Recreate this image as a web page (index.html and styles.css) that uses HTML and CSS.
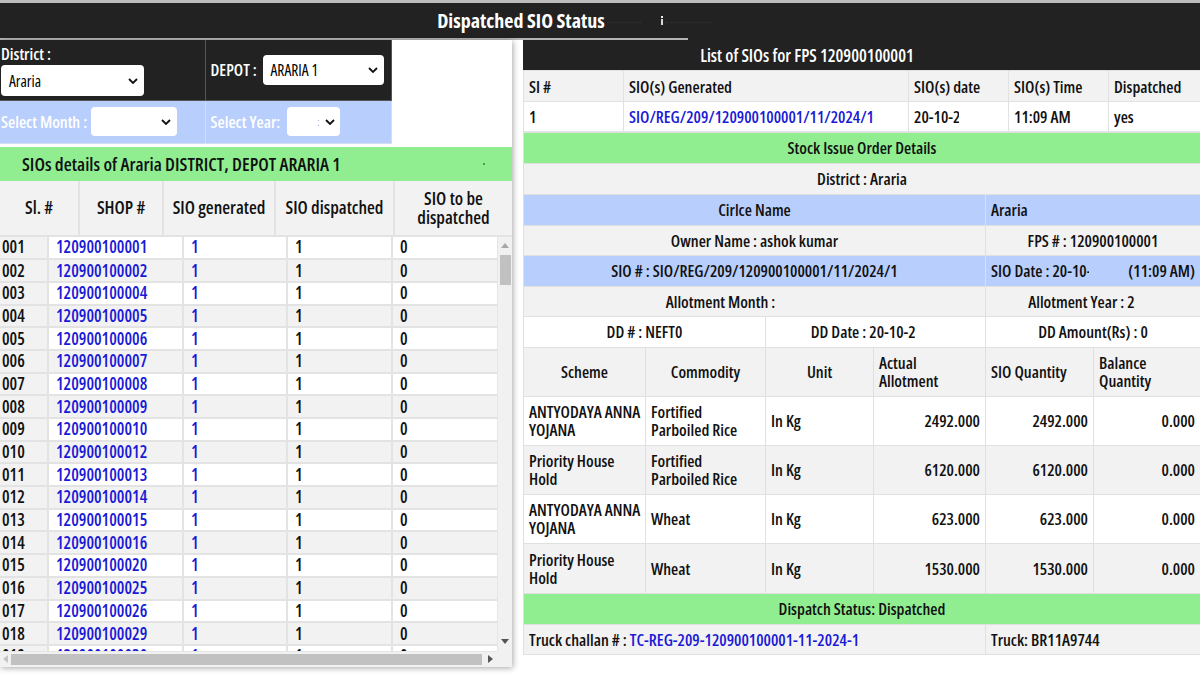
FILE: index.html
```html
<!DOCTYPE html>
<html lang="en">
<head>
<meta charset="utf-8">
<title>Dispatched SIO Status</title>
<link rel="stylesheet" href="styles.css">
</head>
<body>
<header class="topbar">
  <div class="title-row">
    <h1 class="title">Dispatched SIO Status</h1>
    <span class="loader"><span class="dots"></span><span class="tick"></span><span class="dots long"></span></span>
  </div>
</header>
<div class="rule"><span class="rule-light"></span></div>
<main class="layout">
  <section class="left">
    <table class="filters">
      <colgroup><col class="fc1"><col class="fc2"></colgroup>
      <tr class="dark">
        <td class="top">
          <div class="lbl">District :</div>
          <span class="select s-district"><span>Araria</span><svg class="chev" width="10" height="6" viewBox="0 0 10 6"><path d="M1 1l4 4 4-4" fill="none" stroke="#111" stroke-width="1.8"/></svg></span>
        </td>
        <td>
          <div class="cell-flex spread"><span class="lbl">DEPOT :</span><span class="select s-depot"><span>ARARIA 1</span><svg class="chev" width="10" height="6" viewBox="0 0 10 6"><path d="M1 1l4 4 4-4" fill="none" stroke="#111" stroke-width="1.8"/></svg></span></div>
        </td>
      </tr>
      <tr class="blue">
        <td>
          <div class="cell-flex"><span class="lbl">Select Month :</span><span class="select s-month"><span></span><svg class="chev" width="10" height="6" viewBox="0 0 10 6"><path d="M1 1l4 4 4-4" fill="none" stroke="#111" stroke-width="1.8"/></svg></span></div>
        </td>
        <td>
          <div class="cell-flex pad5"><span class="lbl">Select Year:</span><span class="select s-year"><span class="faint">:</span><svg class="chev" width="10" height="6" viewBox="0 0 10 6"><path d="M1 1l4 4 4-4" fill="none" stroke="#111" stroke-width="1.8"/></svg></span></div>
        </td>
      </tr>
    </table>

    <div class="list-head"><span>SIOs details of Araria DISTRICT, DEPOT ARARIA 1</span><span class="spot"></span></div>

    <table class="grid-head">
      <colgroup><col class="h1"><col class="h2"><col class="h3"><col class="h4"><col class="h5"></colgroup>
      <tr><th>Sl. #</th><th>SHOP #</th><th>SIO generated</th><th>SIO dispatched</th><th>SIO to be<br>dispatched</th></tr>
    </table>

    <div class="scroller">
      <div class="viewport">
        <table class="grid-body">
          <colgroup><col class="b1"><col class="b2"><col class="b3"><col class="b4"><col class="b5"></colgroup>
          <tr><td>001</td><td><a href="#">120900100001</a></td><td><a href="#">1</a></td><td>1</td><td>0</td></tr>
          <tr><td>002</td><td><a href="#">120900100002</a></td><td><a href="#">1</a></td><td>1</td><td>0</td></tr>
          <tr><td>003</td><td><a href="#">120900100004</a></td><td><a href="#">1</a></td><td>1</td><td>0</td></tr>
          <tr><td>004</td><td><a href="#">120900100005</a></td><td><a href="#">1</a></td><td>1</td><td>0</td></tr>
          <tr><td>005</td><td><a href="#">120900100006</a></td><td><a href="#">1</a></td><td>1</td><td>0</td></tr>
          <tr><td>006</td><td><a href="#">120900100007</a></td><td><a href="#">1</a></td><td>1</td><td>0</td></tr>
          <tr><td>007</td><td><a href="#">120900100008</a></td><td><a href="#">1</a></td><td>1</td><td>0</td></tr>
          <tr><td>008</td><td><a href="#">120900100009</a></td><td><a href="#">1</a></td><td>1</td><td>0</td></tr>
          <tr><td>009</td><td><a href="#">120900100010</a></td><td><a href="#">1</a></td><td>1</td><td>0</td></tr>
          <tr><td>010</td><td><a href="#">120900100012</a></td><td><a href="#">1</a></td><td>1</td><td>0</td></tr>
          <tr><td>011</td><td><a href="#">120900100013</a></td><td><a href="#">1</a></td><td>1</td><td>0</td></tr>
          <tr><td>012</td><td><a href="#">120900100014</a></td><td><a href="#">1</a></td><td>1</td><td>0</td></tr>
          <tr><td>013</td><td><a href="#">120900100015</a></td><td><a href="#">1</a></td><td>1</td><td>0</td></tr>
          <tr><td>014</td><td><a href="#">120900100016</a></td><td><a href="#">1</a></td><td>1</td><td>0</td></tr>
          <tr><td>015</td><td><a href="#">120900100020</a></td><td><a href="#">1</a></td><td>1</td><td>0</td></tr>
          <tr><td>016</td><td><a href="#">120900100025</a></td><td><a href="#">1</a></td><td>1</td><td>0</td></tr>
          <tr><td>017</td><td><a href="#">120900100026</a></td><td><a href="#">1</a></td><td>1</td><td>0</td></tr>
          <tr><td>018</td><td><a href="#">120900100029</a></td><td><a href="#">1</a></td><td>1</td><td>0</td></tr>
          <tr><td>019</td><td><a href="#">120900100030</a></td><td><a href="#">1</a></td><td>1</td><td>0</td></tr>
        </table>
      </div>
      <div class="vbar">
        <span class="arrow"><svg width="8" height="5" viewBox="0 0 8 5"><path d="M0 5L4 0L8 5Z" fill="#a8a8a8"/></svg></span>
        <span class="vthumb"></span>
        <span class="grow"></span>
        <span class="arrow"><svg width="8" height="5" viewBox="0 0 8 5"><path d="M0 0L8 0L4 5Z" fill="#555"/></svg></span>
      </div>
      <div class="hbar">
        <span class="harrow"><svg width="5" height="8" viewBox="0 0 5 8"><path d="M5 0L5 8L0 4Z" fill="#c4c4c4"/></svg></span>
        <span class="hthumb"></span>
        <span class="harrow"><svg width="5" height="8" viewBox="0 0 5 8"><path d="M0 0L5 4L0 8Z" fill="#555"/></svg></span>
      </div>
      <div class="corner"></div>
    </div>
  </section>

  <section class="right">
    <div class="list-title">List of SIOs for FPS 120900100001</div>
    <table class="sio-table">
      <colgroup><col class="l1"><col class="l2"><col class="l3"><col class="l4"><col class="l5"></colgroup>
      <thead><tr><th>SI #</th><th>SIO(s) Generated</th><th>SIO(s) date</th><th>SIO(s) Time</th><th>Dispatched</th></tr></thead>
      <tbody><tr><td>1</td><td><a href="#">SIO/REG/209/120900100001/11/2024/1</a></td><td><span class="clip c-date">20-10-2024</span></td><td>11:09 AM</td><td>yes</td></tr></tbody>
    </table>

    <table class="details">
      <colgroup><col class="d1"><col class="d2"><col class="d3"><col class="d4"><col class="d5"><col class="d6"></colgroup>
      <tr class="g h31"><td colspan="6">Stock Issue Order Details</td></tr>
      <tr class="gr h31"><td colspan="6" class="c">District : Araria</td></tr>
      <tr class="bl h31"><td colspan="4" class="c">Cirlce Name</td><td colspan="2">Araria</td></tr>
      <tr class="gr h30"><td colspan="4" class="c">Owner Name : ashok kumar</td><td colspan="2" class="c">FPS # : 120900100001</td></tr>
      <tr class="bl h31"><td colspan="4" class="c">SIO # : SIO/REG/209/120900100001/11/2024/1</td><td colspan="2"><div class="sio-date"><span>SIO Date : <span class="clip c-sdate">20-10-2024</span></span><span>(11:09 AM)</span></div></td></tr>
      <tr class="gr h30"><td colspan="4" class="c shift-month">Allotment Month :</td><td colspan="2" class="c shift-year">Allotment Year : <span class="clip c-year">2024</span></td></tr>
      <tr class="wh h31"><td colspan="2" class="c">DD # : NEFT0</td><td colspan="2" class="c shift-dd">DD Date : <span class="clip c-dd">20-10-2024</span></td><td colspan="2" class="c">DD Amount(Rs) : 0</td></tr>
      <tr class="gr h49"><td class="c">Scheme</td><td class="c">Commodity</td><td class="c">Unit</td><td>Actual<br>Allotment</td><td>SIO Quantity</td><td>Balance<br>Quantity</td></tr>
      <tr class="wh h49"><td>ANTYODAYA ANNA<br>YOJANA</td><td>Fortified<br>Parboiled Rice</td><td>In Kg</td><td class="r">2492.000</td><td class="r">2492.000</td><td class="r">0.000</td></tr>
      <tr class="gr h49"><td>Priority House<br>Hold</td><td>Fortified<br>Parboiled Rice</td><td>In Kg</td><td class="r">6120.000</td><td class="r">6120.000</td><td class="r">0.000</td></tr>
      <tr class="wh h49"><td>ANTYODAYA ANNA<br>YOJANA</td><td>Wheat</td><td>In Kg</td><td class="r">623.000</td><td class="r">623.000</td><td class="r">0.000</td></tr>
      <tr class="gr h50"><td>Priority House<br>Hold</td><td>Wheat</td><td>In Kg</td><td class="r">1530.000</td><td class="r">1530.000</td><td class="r">0.000</td></tr>
      <tr class="g h31"><td colspan="6">Dispatch Status: Dispatched</td></tr>
      <tr class="gr h30"><td colspan="4">Truck challan # : <a href="#">TC-REG-209-120900100001-11-2024-1</a></td><td colspan="2">Truck: BR11A9744</td></tr>
    </table>
  </section>
</main>
</body>
</html>
```
FILE: styles.css
```css
:root {
  --dark: #222222;
  --green: #90ee90;
  --gray: #f2f2f2;
  --blue: #b8cefc;
  --line: #e0e0e0;
  --link: #1a1ad6;
}
* { box-sizing: border-box; }
html, body { margin: 0; padding: 0; }
body {
  width: 1200px;
  height: 675px;
  overflow: hidden;
  background: #fff;
  color: #111;
  font-family: "Open Sans", "Liberation Sans", sans-serif;
  font-size: 16.5px;
  font-stretch: 79%;
  font-weight: 600;
}
table { border-collapse: collapse; }
th, td { padding: 0; font-weight: inherit; }
a { color: var(--link); text-decoration: none; }

/* top bar */
.topbar {
  height: 38px;
  background: var(--dark);
  border-top: 3px solid #bcbcbc;
  display: flex;
  justify-content: center;
  align-items: center;
}
.title-row { display: flex; align-items: center; }
.title { margin: 0; font-size: 20px; font-stretch: 75%; font-weight: 700; color: #fff; line-height: 1; }
.loader { width: 158px; display: flex; align-items: center; padding-left: 2px; }
.dots { width: 34px; height: 4px; border-bottom: 1px dotted #333; }
.dots.long { width: 46px; margin-left: 3px; }
.tick { width: 2px; height: 9px; margin-left: 20px; background: linear-gradient(#eee 0 2px, transparent 2px 3px, #d8d8d8 3px); }
.rule { height: 2px; background: var(--dark); display: flex; }
.rule-light { width: 688px; background: #b4b4b4; }

/* layout */
.layout { display: flex; align-items: flex-start; gap: 11px; }
.left { width: 512px; flex: none; background: #fff; box-shadow: 1px 1px 6px rgba(0, 0, 0, .35); }
.right { flex: 1; min-width: 0; overflow: hidden; }

/* filters */
.filters { width: 391px; margin-bottom: 3px; table-layout: fixed; }
.filters .fc1 { width: 205px; }
.filters .fc2 { width: 186px; }
.filters td { border: 1px solid #555; vertical-align: middle; color: #fff; }
.filters td:first-child { border-left: 0; }
.filters tr:first-child td { border-top: 0; }
.filters .dark td { background: var(--dark); height: 60px; }
.filters .blue td { background: var(--blue); height: 43px; border-color: #d3def5; }
.filters .blue td:first-child { border-left: 0; }
.filters td.top { vertical-align: top; padding: 4px 0 0 1px; }
.lbl { white-space: nowrap; }
.filters .top .lbl { margin-bottom: 1px; line-height: 20px; }
.cell-flex { display: flex; align-items: center; gap: 4px; padding-left: 1px; }
.cell-flex.spread { justify-content: space-between; padding: 0 7px 0 5px; }
.cell-flex.pad5 { padding-left: 5px; gap: 7px; }
.select {
  display: inline-flex;
  align-items: center;
  justify-content: space-between;
  background: #fff;
  color: #000;
  border-radius: 4px;
  padding: 0 6px 0 8px;
  height: 30px;
  font-size: 15.5px;
  font-weight: 500;
}
.s-district { width: 143px; height: 31px; }
.s-depot { width: 121px; }
.s-month { width: 86px; height: 29px; }
.s-year { width: 53px; height: 29px; padding-left: 30px; padding-right: 5px; }
.faint { color: #9ab; font-size: 10px; }

/* left list */
.list-head {
  height: 34px;
  background: var(--green);
  display: flex;
  align-items: center;
  padding-left: 22px;
  color: #111;
  font-size: 18.5px;
}
.spot { width: 2px; height: 2px; background: #4c9a4c; margin-left: auto; margin-right: 27px; }
.grid-head { width: 512px; table-layout: fixed; background: var(--gray); }
.grid-head .h1 { width: 79px; }
.grid-head .h2 { width: 84px; }
.grid-head .h3 { width: 112px; }
.grid-head .h4 { width: 119px; }
.grid-head .h5 { width: 118px; }
.grid-head th {
  height: 55px;
  border-right: 2px solid #e3e3e3;
  border-bottom: 2px solid #e3e3e3;
  text-align: center;
  line-height: 19px;
  white-space: nowrap;
  font-size: 18px;
}
.grid-head th:last-child { border-right: 0; }

.scroller {
  display: grid;
  grid-template-columns: 497px 15px;
  grid-template-rows: 414px 16px;
  background: #f1f1f1;
}
.viewport { overflow: hidden; background: var(--gray); }
.grid-body { width: 510px; table-layout: fixed; font-size: 17px; }
.grid-body .b1 { width: 48px; }
.grid-body .b2 { width: 135px; }
.grid-body .b3 { width: 104px; }
.grid-body .b4 { width: 105px; }
.grid-body .b5 { width: 118px; }
.grid-body tr { height: 22.7px; }
.grid-body td {
  border-bottom: 2px solid #e3e3e3;
  border-right: 2px solid #e3e3e3;
  padding: 0 0 0 7px;
  white-space: nowrap;
  line-height: 18px;
}
.grid-body td:first-child { padding-left: 2px; }
.grid-body tr:nth-child(odd) td:not(:first-child) { background: #fff; }

.vbar { display: flex; flex-direction: column; align-items: center; border-left: 1px solid #e6e6e6; }
.arrow { height: 18px; display: flex; align-items: center; }
.vthumb { width: 11px; height: 30px; background: #c1c1c1; }
.grow { flex: 1; }
.hbar { display: flex; align-items: center; padding: 0 4px 0 3px; gap: 3px; border-top: 1px solid #e6e6e6; }
.harrow { display: flex; align-items: center; }
.hthumb { flex: 1; height: 11px; background: #c1c1c1; margin-right: 3px; }
.corner { background: #f1f1f1; }

/* right */
.list-title {
  height: 30px;
  background: var(--dark);
  color: #fff;
  display: flex;
  align-items: center;
  justify-content: center;
  padding-right: 109px;
  font-size: 17.5px;
}
.sio-table, .details { width: 677px; table-layout: fixed; }
.sio-table .l1 { width: 100px; }
.sio-table .l2 { width: 285px; }
.sio-table .l3 { width: 100px; }
.sio-table .l4 { width: 100px; }
.sio-table .l5 { width: 92px; }
.sio-table th, .sio-table td {
  border: 1px solid #e2e2e2;
  text-align: left;
  padding: 0 5px;
  white-space: nowrap;
  overflow: hidden;
}
.sio-table thead tr { height: 31px; background: var(--gray); }
.sio-table tbody tr { height: 30px; background: #fff; }
.clip { display: inline-block; overflow: hidden; white-space: nowrap; vertical-align: bottom; }
.c-date { width: 45px; }
.c-sdate { width: 37px; }
.c-year { width: 7.5px; }
.c-dd { width: 46px; }

.details .d1 { width: 122px; }
.details .d2 { width: 120px; }
.details .d3 { width: 108px; }
.details .d4 { width: 112px; }
.details .d5 { width: 108px; }
.details .d6 { width: 107px; }
.details td {
  border: 1px solid #e0e0e0;
  padding: 0 5px;
  white-space: nowrap;
  overflow: hidden;
  line-height: 18px;
}
.details .h30 { height: 30px; }
.details .h31 { height: 31px; }
.details .h49 { height: 49px; }
.details .h50 { height: 50px; }
.g td { background: var(--green); text-align: center; }
.gr { background: var(--gray); }
.bl { background: var(--blue); }
.wh { background: #fff; }
.c { text-align: center; }
.r { text-align: right; }
.details td.shift-month { padding-right: 73px; }
.details td.shift-year { padding-right: 28px; }
.details td.shift-dd { padding-right: 30px; }
.sio-date { display: flex; justify-content: space-between; }
```
